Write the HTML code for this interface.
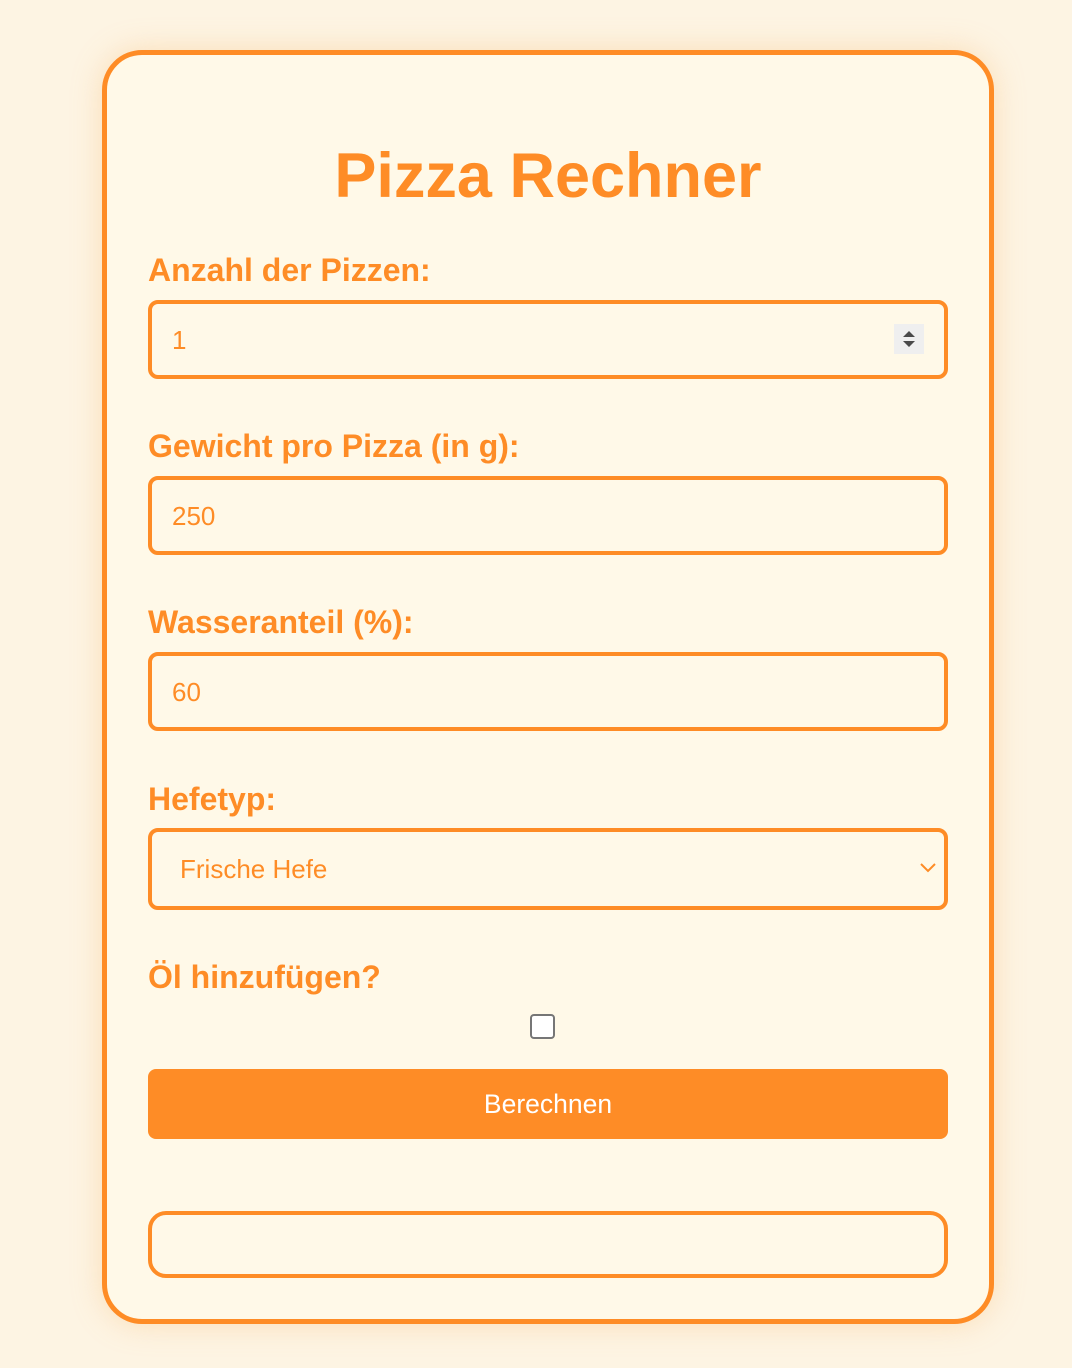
<!DOCTYPE html>
<html><head><meta charset="utf-8"><style>
html,body{margin:0;padding:0;}
body{width:1072px;height:1368px;background:#fdf4e3;font-family:"Liberation Sans",Arial,sans-serif;position:relative;overflow:hidden;}
.card{position:absolute;left:102px;top:50px;width:882px;height:1264px;border:5px solid #fe8c26;border-radius:40px;background:#fff9e8;box-shadow:0 0 30px rgba(250,180,100,0.35);}
.abs{position:absolute;}
h1{position:absolute;left:148px;width:800px;top:140px;margin:0;text-align:center;font-size:63px;font-weight:bold;color:#fe8c26;}
.lbl{position:absolute;left:148px;font-size:32px;font-weight:bold;color:#fe8c26;}
.in{position:absolute;left:148px;width:792px;border:4px solid #fe8c26;border-radius:10px;background:#fff9e8;box-sizing:content-box;}
.val{position:absolute;font-size:26px;color:#fe8c26;}
</style></head><body>
<div class="card"></div>
<h1>Pizza Rechner</h1>
<div class="lbl" style="top:252px">Anzahl der Pizzen:</div>
<div class="in" style="top:300px;height:71px"></div>
<div class="val" style="left:172px;top:325px">1</div>
<div class="abs" style="left:894px;top:324px;width:30px;height:30px;background:#efefef"></div>
<svg class="abs" style="left:894px;top:324px" width="30" height="30"><path d="M9 13 L15 7 L21 13 Z M9 17 L21 17 L15 23 Z" fill="#4a4a4a"/></svg>
<div class="lbl" style="top:428px">Gewicht pro Pizza (in g):</div>
<div class="in" style="top:476px;height:71px"></div>
<div class="val" style="left:172px;top:501px">250</div>
<div class="lbl" style="top:604px">Wasseranteil (%):</div>
<div class="in" style="top:652px;height:71px"></div>
<div class="val" style="left:172px;top:677px">60</div>
<div class="lbl" style="top:781px">Hefetyp:</div>
<div class="in" style="top:828px;height:74px"></div>
<div class="val" style="left:180px;top:854px">Frische Hefe</div>
<svg class="abs" style="left:918px;top:860px" width="20" height="16"><path d="M3 4 L10 11 L17 4" fill="none" stroke="#fe8c26" stroke-width="2"/></svg>
<div class="lbl" style="top:959px">Öl hinzufügen?</div>
<div class="abs" style="left:530px;top:1014px;width:21px;height:21px;border:2px solid #767676;border-radius:4px;background:#fff"></div>
<div class="abs" style="left:148px;top:1069px;width:800px;height:70px;background:#fe8c26;border-radius:8px;color:#fff;font-size:26.5px;text-align:center;line-height:70px">Berechnen</div>
<div class="in" style="top:1211px;height:59px;border-radius:18px"></div>
</body></html>
